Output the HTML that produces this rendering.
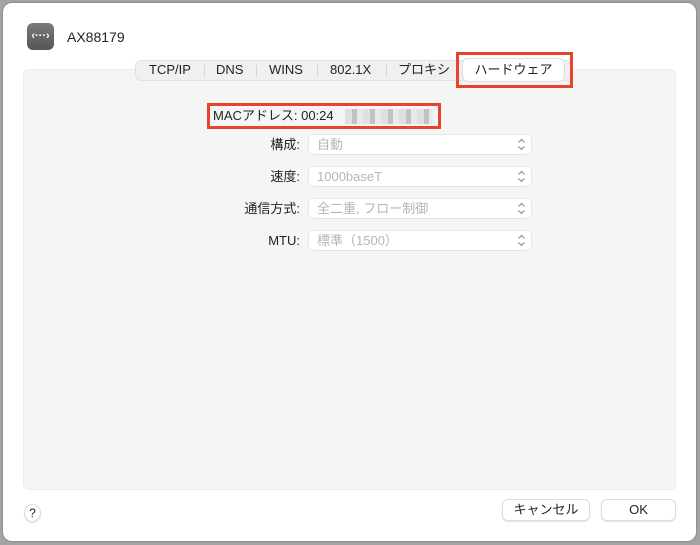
<!DOCTYPE html>
<html><head><meta charset="utf-8"><style>
*{box-sizing:border-box;margin:0;padding:0}
body{width:700px;height:545px;background:#a3a3a3;font-family:"Liberation Sans","Noto Sans CJK JP",sans-serif;position:relative;overflow:hidden;color:#222}
.win{position:absolute;left:2px;top:2px;width:695px;height:540px;background:#fff;border-radius:10px;border:1px solid #8e8e8e}
.abs{position:absolute}
.panel{left:23px;top:69px;width:653px;height:421px;background:#f5f5f5;border-radius:6px;border:1px solid #ececec}
.tabs{left:135px;top:60px;width:437px;height:21px;background:#f0f0f0;border:1px solid #e2e2e2;border-radius:6px;font-size:13px}
.tab{position:absolute;top:0px;line-height:18px}
.sep{position:absolute;top:4px;width:1px;height:12px;background:#d4d4d4}
.sel{left:462px;top:58px;width:103px;height:24px;background:#fff;border:1px solid #ddd;border-radius:6px;font-size:13px;text-align:center;line-height:21px}
.red{border:3px solid #e8442b}
.lbl{font-size:13px;text-align:right;width:200px;left:100px;line-height:16px}
.pop{left:308px;width:224px;height:21px;background:#fff;border:1px solid #e6e6e6;border-radius:5px;font-size:13px;color:#b5b5b5;padding-left:8px;line-height:19px}
.chev{position:absolute;right:5px;top:3px}
.btn{height:22px;background:#fff;border:1px solid #ddd;border-radius:6px;box-shadow:0 1px 1px rgba(0,0,0,.12);font-size:13px;text-align:center;line-height:20px}
</style></head><body>
<div class="win"></div>
<div class="abs" style="left:27px;top:23px;width:27px;height:27px;border-radius:6px;background:linear-gradient(#7a7a7a,#555)"></div>
<div class="abs" style="left:27px;top:23px;width:27px;height:27px;color:#fff;font-size:11px;text-align:center;line-height:26px;font-weight:bold">‹···›</div>
<div class="abs" style="left:67px;top:29px;font-size:14px">AX88179</div>
<div class="abs panel"></div>
<div class="abs tabs">
<span class="tab" style="left:13px">TCP/IP</span><div class="sep" style="left:68px"></div>
<span class="tab" style="left:80px">DNS</span><div class="sep" style="left:120px"></div>
<span class="tab" style="left:133px">WINS</span><div class="sep" style="left:181px"></div>
<span class="tab" style="left:194px">802.1X</span><div class="sep" style="left:250px"></div>
<span class="tab" style="left:262px">プロキシ</span>
</div>
<div class="abs sel">ハードウェア</div>
<div class="abs red" style="left:456px;top:52px;width:117px;height:36px"></div>
<div class="abs red" style="left:207px;top:103px;width:234px;height:26px"></div>
<div class="abs" style="left:213px;top:108px;font-size:13px;line-height:16px">MACアドレス: 00:24</div>
<div class="abs" style="left:345px;top:109px;width:88px;height:15px;background:repeating-linear-gradient(90deg,#ddd 0 7px,#bcbcbc 7px 12px,#e8e8e8 12px 18px);opacity:.9"></div>
<div class="abs lbl" style="top:137px">構成:</div>
<div class="abs lbl" style="top:169px">速度:</div>
<div class="abs lbl" style="top:201px">通信方式:</div>
<div class="abs lbl" style="top:233px">MTU:</div>
<div class="abs pop" style="top:134px">自動<svg class="chev" width="9" height="13" viewBox="0 0 9 13"><path d="M1.5 4.5L4.5 1.5L7.5 4.5M1.5 8.5L4.5 11.5L7.5 8.5" fill="none" stroke="#999" stroke-width="1.3"/></svg></div>
<div class="abs pop" style="top:166px">1000baseT<svg class="chev" width="9" height="13" viewBox="0 0 9 13"><path d="M1.5 4.5L4.5 1.5L7.5 4.5M1.5 8.5L4.5 11.5L7.5 8.5" fill="none" stroke="#999" stroke-width="1.3"/></svg></div>
<div class="abs pop" style="top:198px">全二重, フロー制御<svg class="chev" width="9" height="13" viewBox="0 0 9 13"><path d="M1.5 4.5L4.5 1.5L7.5 4.5M1.5 8.5L4.5 11.5L7.5 8.5" fill="none" stroke="#999" stroke-width="1.3"/></svg></div>
<div class="abs pop" style="top:230px">標準（1500）<svg class="chev" width="9" height="13" viewBox="0 0 9 13"><path d="M1.5 4.5L4.5 1.5L7.5 4.5M1.5 8.5L4.5 11.5L7.5 8.5" fill="none" stroke="#999" stroke-width="1.3"/></svg></div>
<div class="abs btn" style="left:24px;top:504px;width:17px;height:18px;border-radius:50%;font-size:12px;line-height:16px">?</div>
<div class="abs btn" style="left:502px;top:499px;width:88px">キャンセル</div>
<div class="abs btn" style="left:601px;top:499px;width:75px">OK</div>
</body></html>
